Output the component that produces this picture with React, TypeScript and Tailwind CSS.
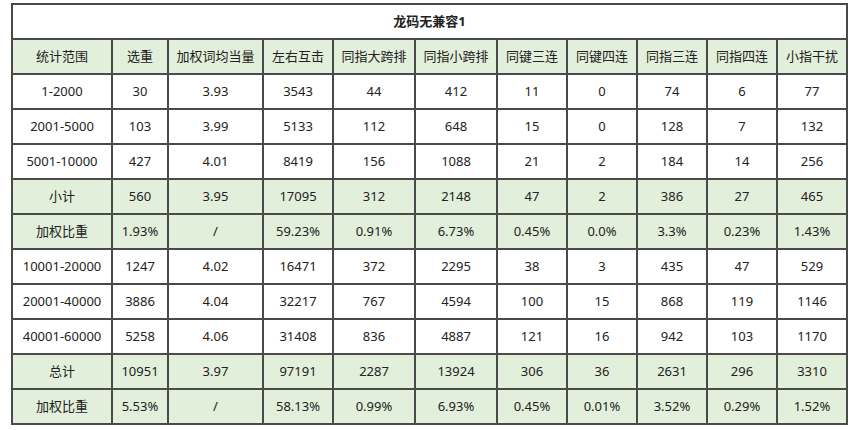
import React from 'react';

const headers = ['统计范围', '选重', '加权词均当量', '左右互击', '同指大跨排', '同指小跨排', '同键三连', '同键四连', '同指三连', '同指四连', '小指干扰'];

// 每行：是否绿色底 + 数据
const rows: { green?: boolean; cells: string[] }[] = [
  { cells: ['1-2000', '30', '3.93', '3543', '44', '412', '11', '0', '74', '6', '77'] },
  { cells: ['2001-5000', '103', '3.99', '5133', '112', '648', '15', '0', '128', '7', '132'] },
  { cells: ['5001-10000', '427', '4.01', '8419', '156', '1088', '21', '2', '184', '14', '256'] },
  { green: true, cells: ['小计', '560', '3.95', '17095', '312', '2148', '47', '2', '386', '27', '465'] },
  { green: true, cells: ['加权比重', '1.93%', '/', '59.23%', '0.91%', '6.73%', '0.45%', '0.0%', '3.3%', '0.23%', '1.43%'] },
  { cells: ['10001-20000', '1247', '4.02', '16471', '372', '2295', '38', '3', '435', '47', '529'] },
  { cells: ['20001-40000', '3886', '4.04', '32217', '767', '4594', '100', '15', '868', '119', '1146'] },
  { cells: ['40001-60000', '5258', '4.06', '31408', '836', '4887', '121', '16', '942', '103', '1170'] },
  { green: true, cells: ['总计', '10951', '3.97', '97191', '2287', '13924', '306', '36', '2631', '296', '3310'] },
  { green: true, cells: ['加权比重', '5.53%', '/', '58.13%', '0.99%', '6.93%', '0.45%', '0.01%', '3.52%', '0.29%', '1.52%'] },
];

const App: React.FC = () => {
  return (
    <div
      className="w-[854px] h-[430px] bg-white pt-[3px] pl-[11px] text-[13px] text-[#222]"
      style={{ fontFamily: '"Noto Sans", "Noto Sans CJK SC", sans-serif' }}
    >
      <div className="grid w-[837px] grid-cols-[98px_54px_93px_68px_80px_80px_68px_68px_68px_68px_68px] auto-rows-[33px] gap-[2px] bg-[#4a4a4a] p-[2px]">
        {/* 标题 */}
        <div className="col-span-11 flex items-center justify-center bg-white font-bold">龙码无兼容1</div>
        {headers.map((h) => (
          <div key={h} className="flex items-center justify-center bg-[#e2efda] whitespace-nowrap">
            {h}
          </div>
        ))}
        {rows.map((row, i) =>
          row.cells.map((c, j) => (
            <div
              key={`${i}-${j}`}
              className={`flex items-center justify-center whitespace-nowrap ${row.green ? 'bg-[#e2efda]' : 'bg-white'}`}
            >
              {c}
            </div>
          )),
        )}
      </div>
    </div>
  );
};

export default App;
